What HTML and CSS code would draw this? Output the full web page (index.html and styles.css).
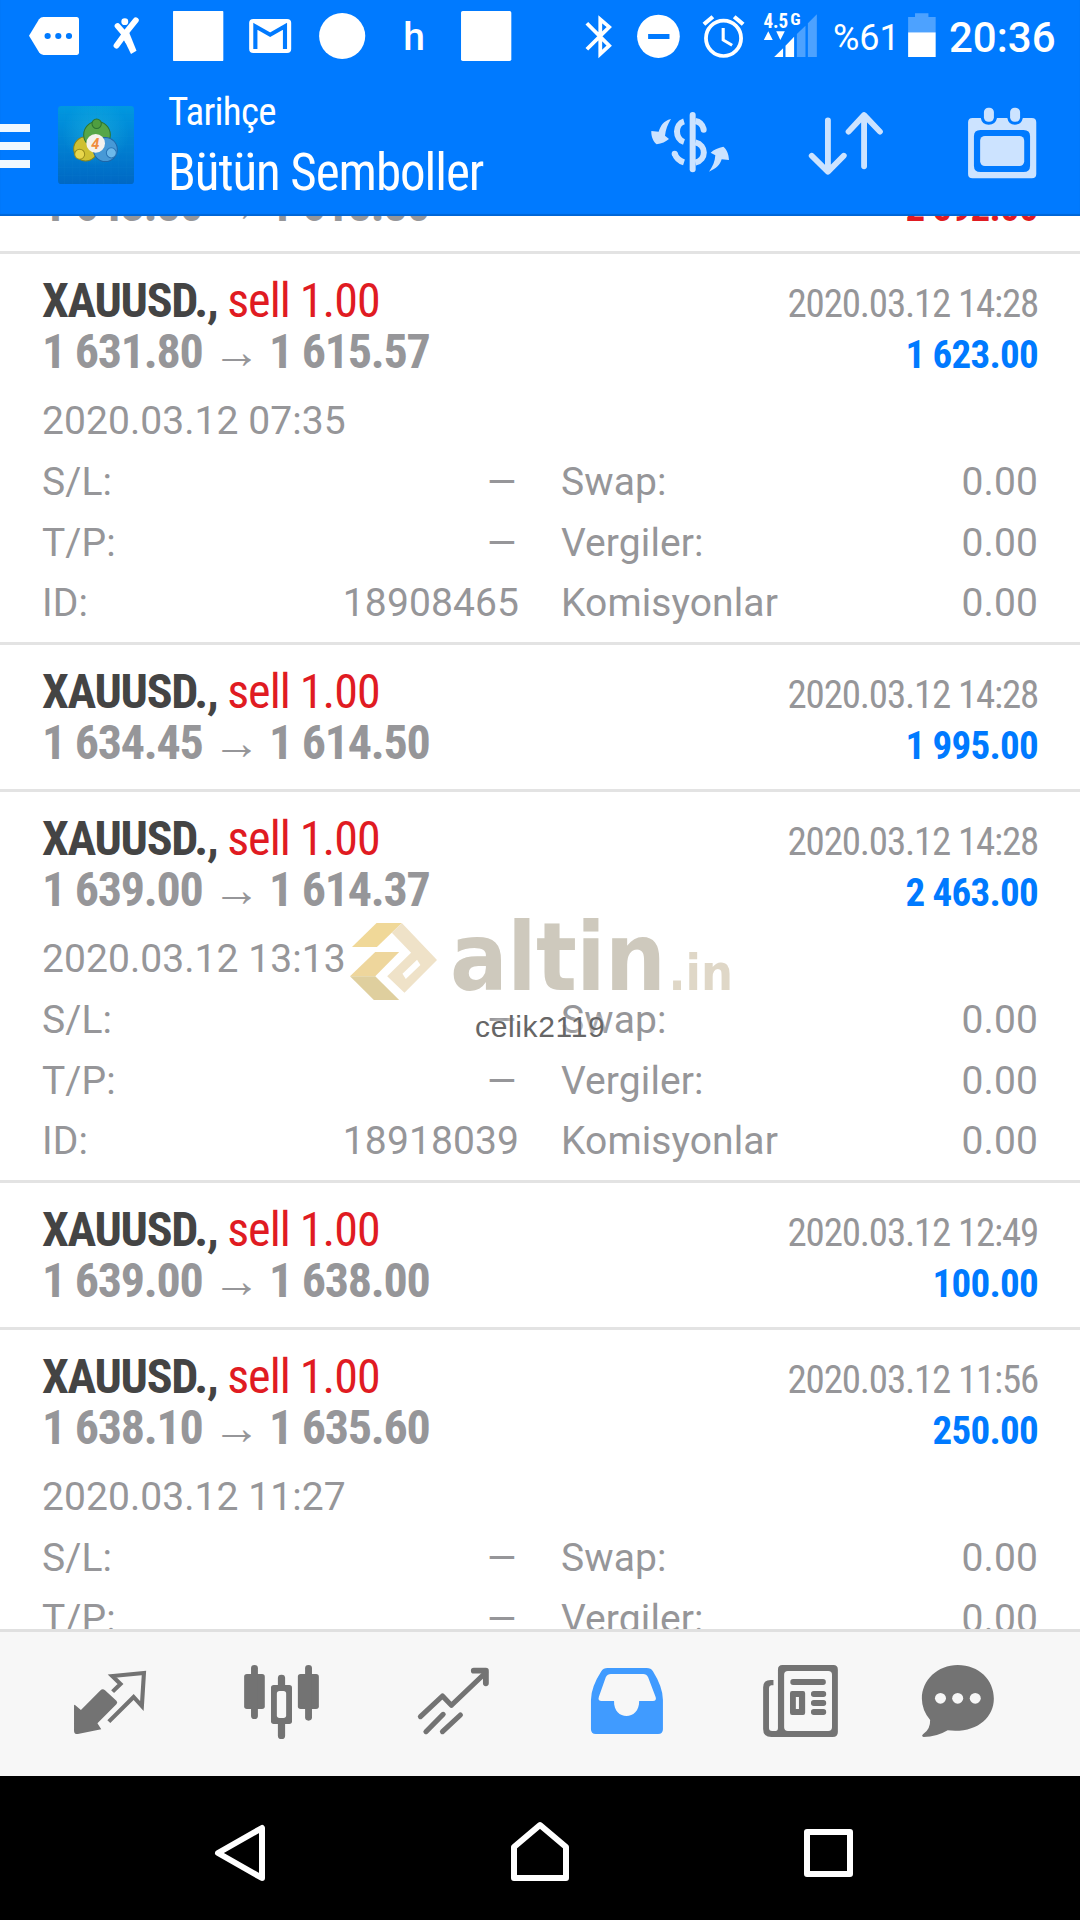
FILE: index.html
```html
<!DOCTYPE html>
<html lang="tr">
<head>
  <meta charset="UTF-8">
  <title>Tarihçe - Bütün Semboller</title>
  <link rel="stylesheet" href="styles.css">
</head>
<body>

  <!-- STATUS BAR -->
  <header class="header">
    <div class="status-bar">
      <div class="notifications">
        <svg class="note" viewBox="52 0 209 216" preserveAspectRatio="none">
          <path fill="#fff" d="M84 107L113 58Q118 51 126 51H222Q229 51 229 59V157Q229 165 222 165H126Q118 165 113 157Z"/>
          <g fill="#007aff"><circle cx="138" cy="108" r="9"/><circle cx="169" cy="108" r="9"/><circle cx="200" cy="108" r="9"/></g>
        </svg>
        <svg class="note" viewBox="261 0 209 216" preserveAspectRatio="none">
          <circle cx="362" cy="65" r="10" fill="#fff"/>
          <path stroke="#fff" stroke-width="17" stroke-linecap="round" fill="none" d="M394 61L369 93L338 137M341 78L362 103L370 122"/>
          <path fill="#fff" d="M352 103L374 96L396 152L380 162Z"/>
        </svg>
        <svg class="note" viewBox="470 0 209 216" preserveAspectRatio="none">
          <rect x="502" y="33" width="146" height="150" rx="2" fill="#fff"/>
        </svg>
        <svg class="note" viewBox="679 0 209 216" preserveAspectRatio="none">
          <rect x="723" y="57" width="122" height="102" rx="12" fill="#fff"/>
          <path stroke="#007aff" stroke-width="12" fill="none" d="M741 147V79L784 104L827 79V147"/>
        </svg>
        <svg class="note" viewBox="888 0 209 216" preserveAspectRatio="none">
          <ellipse cx="993" cy="108" rx="67" ry="69" fill="#fff"/>
        </svg>
        <span class="note note-letter">h</span>
        <svg class="note" viewBox="1307 0 209 216" preserveAspectRatio="none">
          <rect x="1339" y="33" width="146" height="150" rx="5" fill="#fff"/>
        </svg>
      </div>
      <div class="system">
        <svg class="sys-bluetooth" viewBox="81.3 0 180 216" preserveAspectRatio="none">
          <path stroke="#fff" stroke-width="11" fill="none" d="M136 70L201 137L175 162V58L201 81L136 148"/>
        </svg>
        <svg class="sys-dnd" viewBox="261.4 0 174.2 216" preserveAspectRatio="none">
          <ellipse cx="344" cy="109" rx="62" ry="65" fill="#fff"/>
          <rect x="314" y="102" width="62" height="15" fill="#007aff"/>
        </svg>
        <svg class="sys-alarm" viewBox="435.6 0 191.7 216" preserveAspectRatio="none">
          <g stroke="#fff" fill="none">
            <ellipse cx="533" cy="115" rx="51" ry="53" stroke-width="11"/>
            <path stroke-width="9" d="M532 84V120L558 136"/>
            <path stroke-width="12" d="M476 73L502 50M564 50L590 73"/>
          </g>
        </svg>
        <svg class="sys-signal" viewBox="627.3 0 191.7 216" preserveAspectRatio="none">
          <path fill="#fff" d="M650 120L663 94L676 120ZM686 94H711L698 120ZM680 171L706 145V171ZM713 171V137L738 110V171Z"/>
          <path fill="#4da2ff" d="M746 171V102L771 77V171ZM778 171V70L804 43V171Z"/>
          <text class="net" x="649" y="84" textLength="72" lengthAdjust="spacingAndGlyphs">4.5</text>
          <text class="net net-small" x="727" y="75" textLength="30" lengthAdjust="spacingAndGlyphs">G</text>
        </svg>
        <span class="percent">%61</span>
        <svg class="sys-battery" viewBox="1045.4 0 127.8 216" preserveAspectRatio="none">
          <path fill="#4da2ff" d="M1069 97V51H1089V40H1128V51H1149V97Z"/>
          <rect x="1069" y="97" width="80" height="74" fill="#fff"/>
        </svg>
        <span class="clock">20:36</span>
      </div>
    </div>

    <!-- TITLE BAR -->
    <div class="title-bar">
      <div class="menu"><i></i><i></i><i></i></div>
      <svg class="app-icon" viewBox="55 50 228 233" preserveAspectRatio="none">
        <defs>
          <linearGradient id="tile" x1="0" y1="0" x2="0" y2="1">
            <stop offset="0" stop-color="#0098e0"/>
            <stop offset="1" stop-color="#0068c4"/>
          </linearGradient>
          <radialGradient id="glow">
            <stop offset="0" stop-color="#22b4dc" stop-opacity=".6"/>
            <stop offset="1" stop-color="#22b4dc" stop-opacity="0"/>
          </radialGradient>
        </defs>
        <rect x="55" y="50" width="228" height="233" rx="10" fill="url(#tile)"/>
        <circle cx="168" cy="130" r="100" fill="url(#glow)"/>
        <path stroke="#2a9fd6" stroke-opacity=".25" fill="none" d="M75 50V283M98 50V283M121 50V283M144 50V283M168 50V283M191 50V283M214 50V283M237 50V283M260 50V283M55 73H283M55 96H283M55 119H283M55 142H283M55 165H283M55 188H283M55 211H283M55 234H283M55 257H283"/>
        <g stroke-width="3">
          <circle cx="138" cy="178" r="36" fill="#cfc032" stroke="#8c8415"/>
          <circle cx="172" cy="136" r="40" fill="#56a648" stroke="#2c7432"/>
          <circle cx="197" cy="180" r="36" fill="#4799d6" stroke="#1d65a8"/>
          <circle cx="120" cy="194" r="15" fill="#e8d64c" stroke="#978b1c"/>
          <circle cx="171" cy="103" r="14" fill="#4f9e40" stroke="#2c7432"/>
          <circle cx="215" cy="190" r="15" fill="#6db9ea" stroke="#2773b6"/>
        </g>
        <circle cx="168" cy="162" r="28" fill="#f4f2ee"/>
        <text class="app-digit" x="155" y="178">4</text>
      </svg>
      <div class="titles">
        <div class="subtitle">Tarihçe</div>
        <h1 class="title">Bütün Semboller</h1>
      </div>
      <div class="actions">
        <svg class="action" viewBox="612 72 156 144">
          <g transform="translate(640 100) scale(.3333)">
            <path stroke="#cce3ff" stroke-width="18" fill="none" d="M132 64C104 72 104 117 132 126M166 63Q185 66 191 87M166 127C200 135 200 180 166 188M104 160Q110 180 132 187"/>
            <g fill="#cce3ff">
              <circle cx="191" cy="89" r="9"/>
              <circle cx="104" cy="161" r="9"/>
              <path d="M93 57C70 62 62 78 56 95L34 93C33 110 40 125 50 133C65 131 78 125 87 117L75 107C77 90 83 72 93 57Z"/>
              <path d="M207 215C230 205 240 195 245 178L267 180C266 160 260 148 250 140C235 143 222 148 212 158L226 166C225 185 218 200 207 215Z"/>
            </g>
            <path stroke="#cce3ff" stroke-width="18" stroke-linecap="round" d="M158 45V208"/>
          </g>
        </svg>
        <svg class="action" viewBox="662 216 453 432" preserveAspectRatio="none">
          <path stroke="#cce3ff" stroke-width="17" stroke-linecap="round" stroke-linejoin="round" fill="none" d="M836 361V514M789 467L836 515L882 467M941 499V347M896 395L941 345L987 395"/>
        </svg>
        <svg class="action" viewBox="1115 216 453 432" preserveAspectRatio="none">
          <path fill="#cce3ff" fill-rule="evenodd" d="M1256 354H1280Q1283 374 1303 374T1327 354H1357Q1360 374 1379 374T1402 354H1428Q1441 354 1441 367V522Q1441 535 1428 535H1256Q1243 535 1243 522V367Q1243 354 1256 354ZM1279 390Q1260 390 1260 409V497Q1260 516 1279 516H1404Q1423 516 1423 497V409Q1423 390 1404 390Z"/>
          <rect x="1278" y="408" width="128" height="90" rx="14" fill="#cce3ff"/>
          <rect x="1289" y="323" width="29" height="42" rx="13" fill="#cce3ff"/>
          <rect x="1365" y="323" width="29" height="42" rx="13" fill="#cce3ff"/>
        </svg>
      </div>
    </div>
  </header>

  <!-- HISTORY -->
  <main class="history">
    <div id="deals"></div>

    <div class="watermark">
      <div class="brand">
        <svg class="brand-logo" viewBox="62 99 262 231" preserveAspectRatio="none">
          <path fill="#f0d898" d="M142 99H218L143 171H68Z"/>
          <path fill="#eed69c" d="M138 186H210L138 259H62Z"/>
          <path fill="#dfcf9e" d="M62 259H138L210 330H134Z"/>
          <path fill="#efe2c8" fill-rule="evenodd" d="M218 99L324 210L226 308L174 259L246 188L188 128ZM264 209L220 251L230 267L274 225Z"/>
        </svg>
        <span class="brand-name">altin</span><span class="brand-domain">.in</span>
      </div>
      <div class="user">celik2119</div>
    </div>
  </main>

  <!-- TABS -->
  <nav class="tabs">
    <svg class="tab" viewBox="69.7 96 499.5 432" preserveAspectRatio="none">
      <path fill="#737373" d="M217 314L235 330L292 271Q298 264 305 271L338 302Q343 307 338 313L283 370L294 388L226 402Q215 403 215 392V316Z"/>
      <path stroke="#737373" stroke-width="12" fill="none" d="M327 275L350 252L326 228L418 219L412 318L388 291L316 365"/>
    </svg>
    <svg class="tab" viewBox="569.2 96 499.5 432" preserveAspectRatio="none">
      <g fill="#737373">
        <rect x="709" y="222" width="60" height="105" rx="8"/><rect x="729" y="195" width="20" height="162" rx="10"/>
        <rect x="865" y="222" width="61" height="105" rx="8"/><rect x="886" y="195" width="20" height="167" rx="10"/>
        <rect x="787" y="255" width="61" height="117" rx="8"/><rect x="807" y="224" width="21" height="193" rx="10"/>
      </g>
      <rect x="804" y="273" width="27" height="81" rx="8" fill="#f7f7f7"/>
    </svg>
    <svg class="tab" viewBox="1068.7 96 499.5 432" preserveAspectRatio="none">
      <g stroke="#737373" stroke-width="15" stroke-linecap="round" stroke-linejoin="round" fill="none">
        <path d="M1221 350L1285 288L1311 316L1410 218M1237 395L1287 343M1285 395L1337 345"/>
        <path stroke-width="17" d="M1376 212H1411V250"/>
      </g>
    </svg>
    <svg class="tab" viewBox="0 96 499.5 432" preserveAspectRatio="none">
      <path fill="#409bff" fill-rule="evenodd" d="M196 204H310Q322 204 328 214Q357 262 357 300V388Q357 402 343 402H162Q148 402 148 388V300Q148 262 178 214Q184 204 196 204ZM206 222Q196 222 191 232L171 290Q167 303 179 303H215C213 363 289 363 288 303H328Q339 303 336 292L314 232Q309 222 300 222Z"/>
    </svg>
    <svg class="tab" viewBox="499.5 96 499.5 432" preserveAspectRatio="none">
      <path fill="#737373" fill-rule="evenodd" d="M704 195H852Q865 195 865 209V396Q865 411 850 411H672Q648 411 648 387V262Q648 240 670 240H678V256H672Q665 257 665 264V384Q665 393 674 393H684Q691 393 691 384V209Q691 195 704 195ZM720 213Q709 213 709 224V382Q709 393 720 393H837Q848 393 848 382V224Q848 213 837 213Z"/>
      <g fill="#737373">
        <rect x="727" y="237" width="103" height="18" rx="8"/>
        <rect x="787" y="273" width="44" height="18" rx="8"/>
        <rect x="787" y="300" width="44" height="18" rx="8"/>
        <rect x="787" y="327" width="44" height="18" rx="8"/>
        <path fill-rule="evenodd" d="M732 273H764Q770 273 770 280V338Q770 345 764 345H732Q726 345 726 338V280Q726 273 732 273ZM743 291V327H752V291Z"/>
      </g>
    </svg>
    <svg class="tab" viewBox="999 96 499.5 432" preserveAspectRatio="none">
      <path fill="#737373" d="M1213 195C1275 195 1318 240 1318 296C1318 355 1265 401 1184 391Q1152 411 1114 411Q1106 408 1113 402Q1134 388 1133 360Q1109 330 1109 296C1109 240 1155 195 1213 195Z"/>
      <g fill="#f7f7f7"><circle cx="1163" cy="295" r="16"/><circle cx="1213" cy="295" r="16"/><circle cx="1264" cy="295" r="16"/></g>
    </svg>
  </nav>

  <!-- ANDROID KEYS -->
  <footer class="keys">
    <svg class="key" viewBox="90 1776 300 144"><path d="M218 1853L262 1828V1878Z"/></svg>
    <svg class="key" viewBox="390 1776 300 144"><path d="M514 1847L540 1825L566 1847V1878H514Z"/></svg>
    <svg class="key" viewBox="690 1776 300 144"><path d="M807 1832H850V1874H807Z"/></svg>
  </footer>

  <script>
    const deals = [
      { open: "1 643.80", close: "1 618.80", closed: "2020.03.12 14:28", profit: "2 592.00", loss: true },
      { open: "1 631.80", close: "1 615.57", closed: "2020.03.12 14:28", profit: "1 623.00", opened: "2020.03.12 07:35", id: "18908465" },
      { open: "1 634.45", close: "1 614.50", closed: "2020.03.12 14:28", profit: "1 995.00" },
      { open: "1 639.00", close: "1 614.37", closed: "2020.03.12 14:28", profit: "2 463.00", opened: "2020.03.12 13:13", id: "18918039" },
      { open: "1 639.00", close: "1 638.00", closed: "2020.03.12 12:49", profit: "100.00" },
      { open: "1 638.10", close: "1 635.60", closed: "2020.03.12 11:56", profit: "250.00", opened: "2020.03.12 11:27" }
    ];

    function pair(label, value) {
      return `<div class="pair"><span>${label}</span><span class="${value === '–' ? 'dash' : ''}">${value}</span></div>`;
    }

    function details(deal) {
      return `
        <div class="opened">${deal.opened}</div>
        <div class="details">
          ${pair('S/L:', '–')}
          ${pair('Swap:', '0.00')}
          ${pair('T/P:', '–')}
          ${pair('Vergiler:', '0.00')}
          ${deal.id ? pair('ID:', deal.id) + pair('Komisyonlar', '0.00') : ''}
        </div>`;
    }

    document.getElementById('deals').innerHTML = deals.map(deal => `
      <section class="deal ${deal.opened ? 'open' : ''}">
        <div class="line">
          <span class="symbol">XAUUSD., <span class="side">sell 1.00</span></span>
          <span class="closed">${deal.closed}</span>
        </div>
        <div class="line">
          <span class="prices">${deal.open} <span class="arrow">→</span> ${deal.close}</span>
          <span class="profit ${deal.loss ? 'loss' : ''}">${deal.profit}</span>
        </div>
        ${deal.opened ? details(deal) : ''}
      </section>`).join('');
  </script>
</body>
</html>
```
FILE: styles.css
```css
* {
  box-sizing: border-box;
}

body {
  margin: 0;
  width: 1080px;
  height: 1920px;
  display: flex;
  flex-direction: column;
  overflow: hidden;
  background: #fff;
  font-family: Roboto, sans-serif;
}

svg {
  display: block;
  flex: none;
}

/* header */
.header {
  height: 216px;
  flex: none;
  background: #007aff;
  box-shadow: inset 0 -2px 1px #0066d6;
  color: #fff;
}

.status-bar {
  height: 72px;
  display: flex;
  justify-content: space-between;
}

.notifications,
.system {
  display: flex;
}

.notifications {
  padding-left: 18px;
}

.note {
  width: 72px;
  height: 72px;
}

.note-letter {
  font-size: 39px;
  font-weight: 500;
  line-height: 75px;
  text-align: center;
}

.system {
  padding-right: 23px;
  line-height: 72px;
}

.system svg {
  height: 72px;
}

.sys-bluetooth {
  width: 62px;
}

.sys-dnd {
  width: 60px;
}

.sys-alarm,
.sys-signal {
  width: 66px;
}

.sys-battery {
  width: 44px;
}

.net {
  font: 700 58px "Roboto Condensed", sans-serif;
  fill: #fff;
}

.net-small {
  font-size: 50px;
}

.percent {
  width: 78px;
  padding-left: 11px;
  font-size: 36px;
  line-height: 76px;
}

.clock {
  width: 113px;
  padding-left: 5px;
  font-size: 42px;
  line-height: 75px;
  font-weight: 500;
}

.title-bar {
  height: 144px;
  display: flex;
}

.menu {
  width: 30px;
  margin-right: 28px;
  padding-top: 52px;
}

.menu i {
  display: block;
  height: 8px;
  margin-bottom: 10px;
  background: #f0f8ff;
}

.app-icon {
  width: 76px;
  height: 78px;
  margin: 34px 34px 0 0;
}

.app-digit {
  font: italic 700 44px Roboto, sans-serif;
  fill: #f08c3c;
}

.titles {
  flex: 1;
  padding-top: 13px;
  font-family: "Roboto Condensed", Roboto, sans-serif;
}

.subtitle {
  font-size: 39px;
  line-height: 54px;
  letter-spacing: -0.7px;
}

.title {
  margin: 0;
  font-size: 51px;
  font-weight: 400;
  line-height: 68px;
  letter-spacing: -1.05px;
  white-space: nowrap;
}

.actions {
  display: flex;
}

.action {
  width: 156px;
  height: 144px;
}

/* deals */
.history {
  position: relative;
  flex: 1;
  min-height: 0;
  overflow: hidden;
}

#deals {
  margin-top: -109px;
}

.deal {
  height: 147px;
  padding: 21px 42px 0;
  border-bottom: 3px solid #e3e3e3;
  color: #969699;
}

.deal.open {
  height: 391px;
}

.line {
  height: 51px;
  display: flex;
  justify-content: space-between;
  align-items: baseline;
  font-family: "Roboto Condensed", Roboto, sans-serif;
  line-height: 51px;
  white-space: pre;
}

.symbol {
  color: #444;
  font-size: 48px;
  font-weight: 700;
  letter-spacing: -1.3px;
}

.side {
  color: #e01b22;
  font-weight: 400;
  letter-spacing: -0.95px;
}

.prices {
  font-size: 48px;
  font-weight: 700;
  letter-spacing: -1.25px;
}

.arrow {
  font-family: "Liberation Sans", sans-serif;
  font-weight: 700;
  line-height: 1;
}

.closed {
  font-size: 39px;
  letter-spacing: -1.2px;
}

.profit {
  color: #007aff;
  font-size: 39px;
  font-weight: 700;
  letter-spacing: -0.75px;
}

.loss {
  color: #e01b22;
}

.opened {
  padding-top: 14px;
  font-size: 39px;
  line-height: 61px;
  letter-spacing: 0.06px;
}

.details {
  display: grid;
  grid-template-columns: 1fr 1fr;
  column-gap: 42px;
  font-size: 39px;
  line-height: 60.6px;
  letter-spacing: 0.1px;
}

.pair {
  display: flex;
  justify-content: space-between;
}

.dash {
  transform: scaleX(1.28);
  transform-origin: right;
}

/* watermark over the list */
.watermark {
  position: absolute;
  left: 350px;
  top: 686px;
}

.brand {
  height: 94px;
  display: flex;
  align-items: baseline;
  font-family: "DejaVu Sans Condensed", "DejaVu Sans", sans-serif;
  font-stretch: condensed;
  font-weight: 700;
  line-height: 110px;
}

.brand-logo {
  width: 87px;
  height: 77px;
  margin-right: 13px;
  transform: translateY(10px);
}

.brand-name {
  color: #cec9bd;
  font-size: 95px;
  letter-spacing: -0.5px;
}

.brand-domain {
  margin-left: 3px;
  color: #dfd7c7;
  font-size: 50px;
}

.user {
  padding: 13px 0 0 125px;
  color: #666;
  font: 30px/36px "Liberation Sans", Arial, sans-serif;
  letter-spacing: 0.65px;
  text-shadow: 0 0 4px #fff;
}

/* bottom tabs */
.tabs {
  height: 147px;
  flex: none;
  display: flex;
  padding: 0 24px;
  background: #f7f7f7;
  border-top: 3px solid #e0e0e0;
}

.tab {
  width: 172px;
  height: 144px;
}

.keys {
  height: 144px;
  flex: none;
  display: flex;
  padding: 0 90px;
  background: #000;
}

.key {
  width: 300px;
  height: 144px;
  fill: none;
  stroke: #fff;
  stroke-width: 6;
  stroke-linejoin: round;
}
```
